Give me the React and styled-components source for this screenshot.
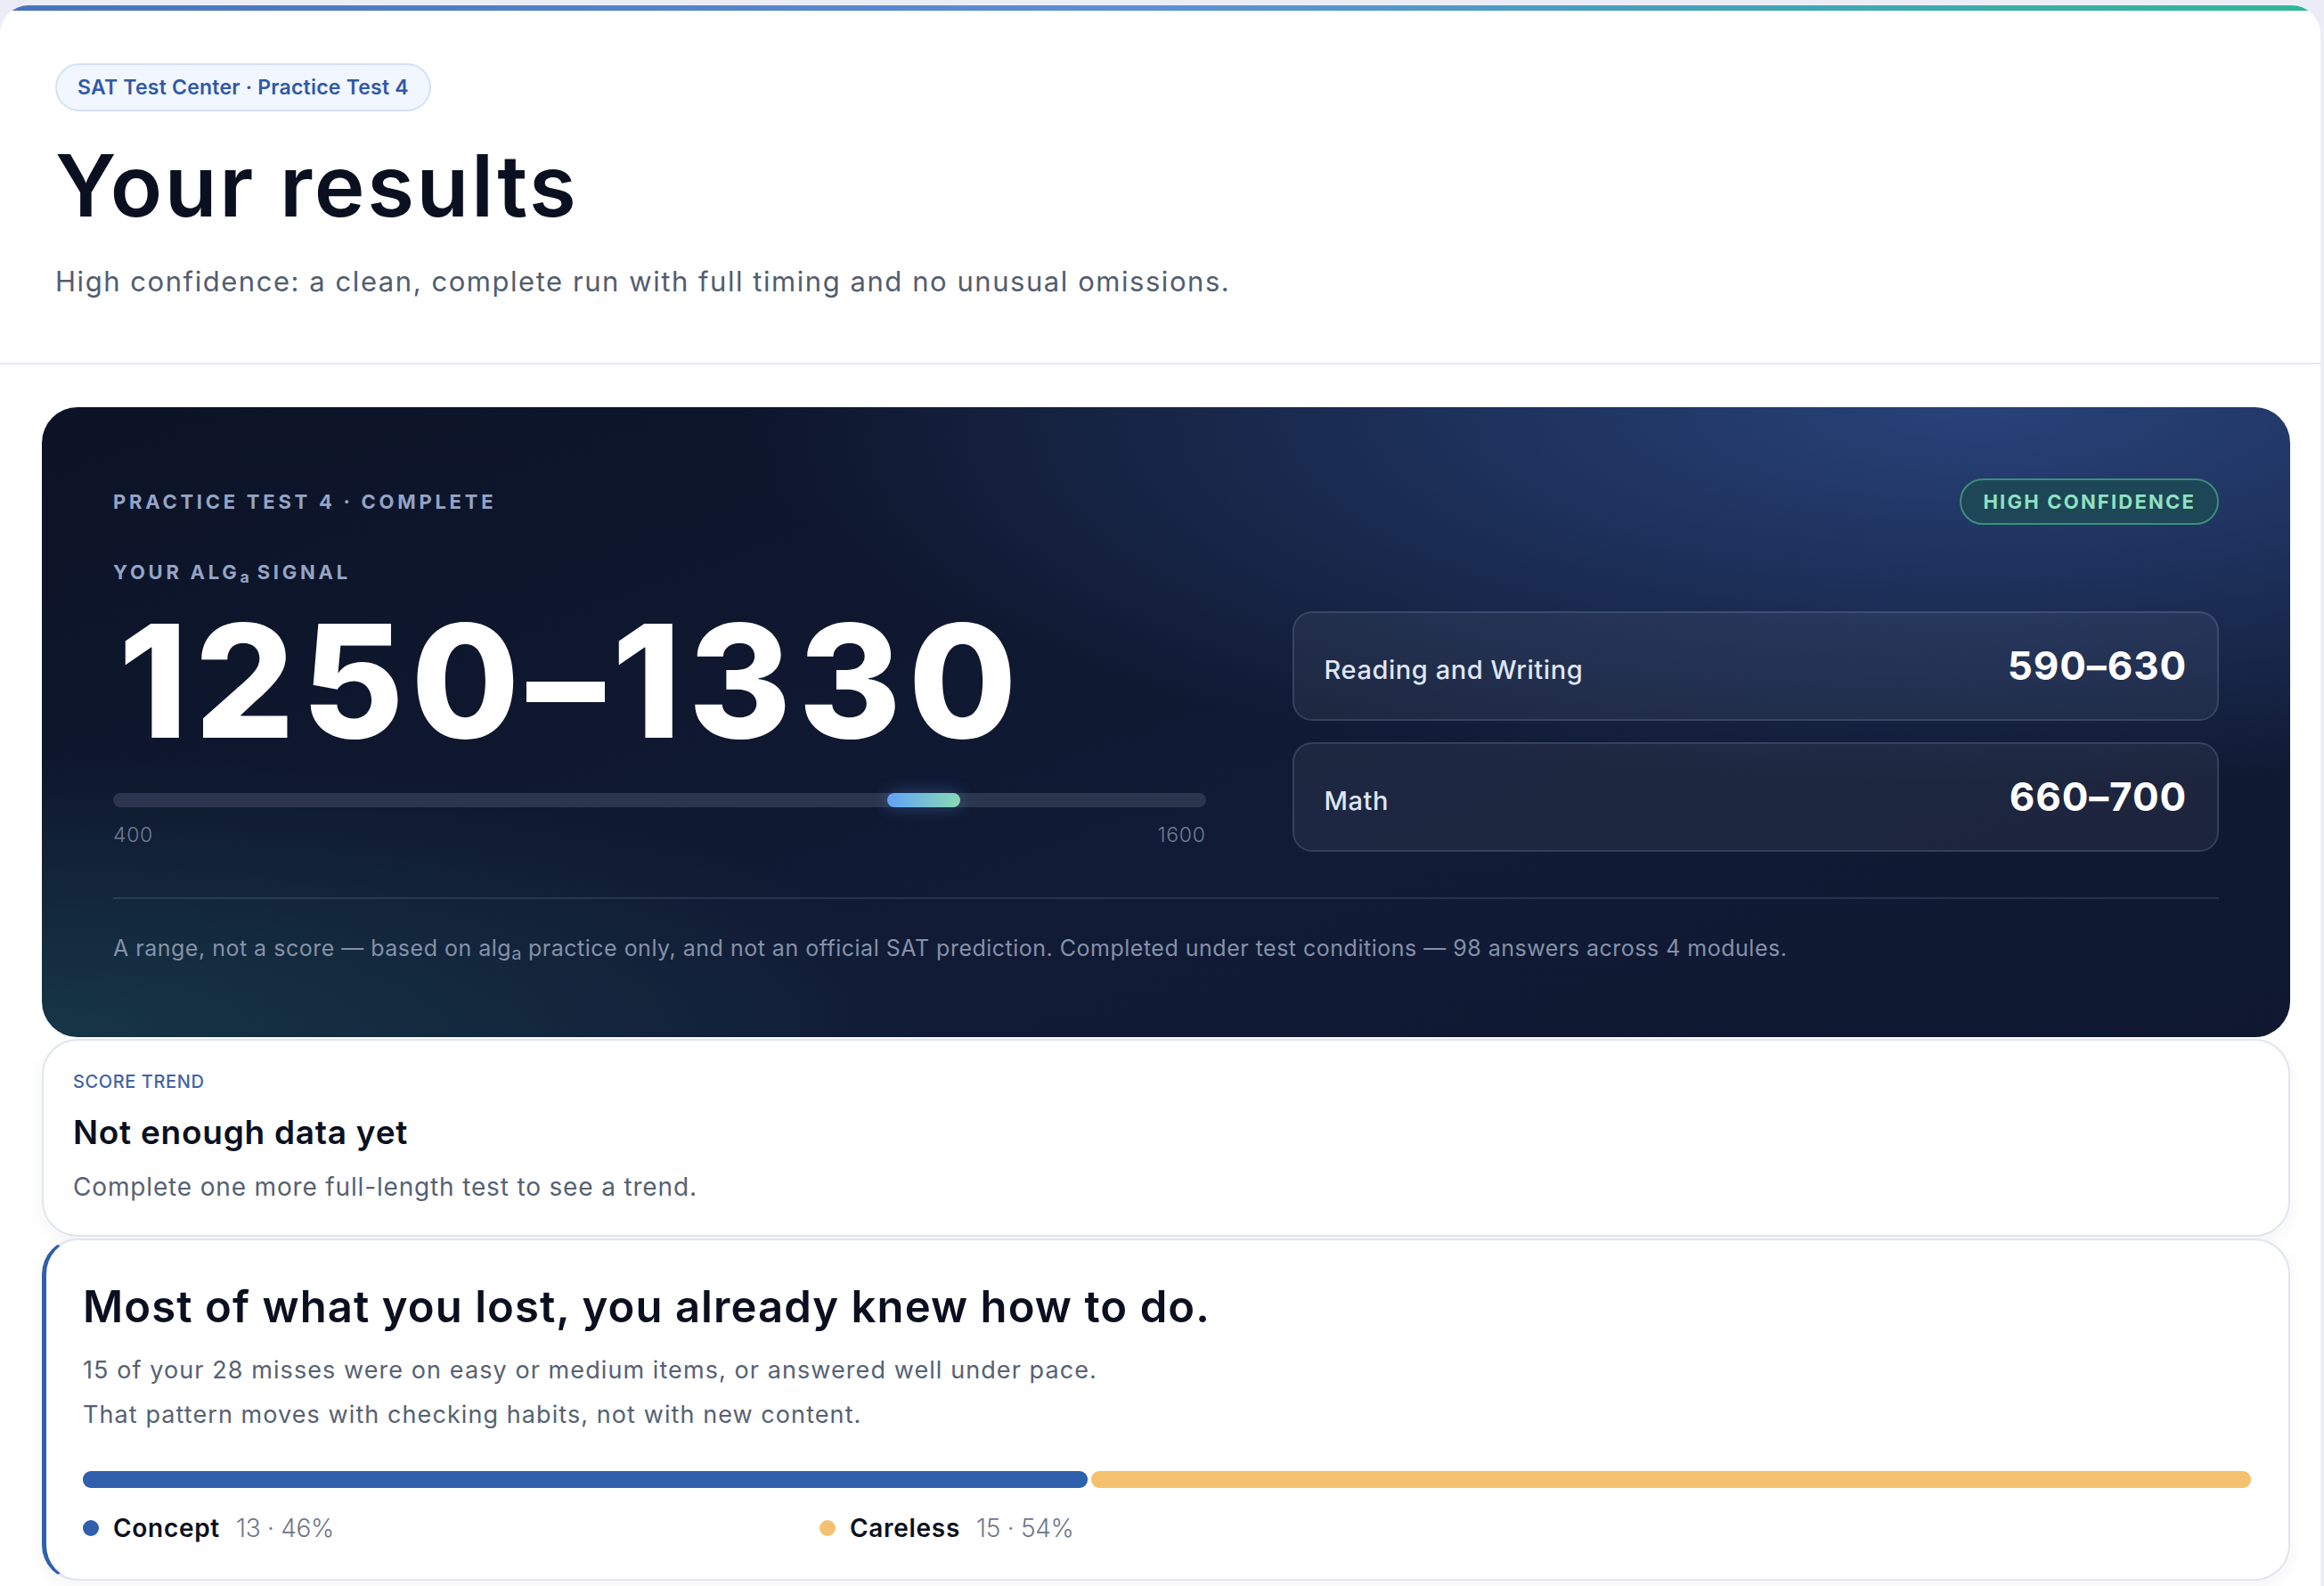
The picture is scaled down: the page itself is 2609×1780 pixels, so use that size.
import React from 'react';
import styled, { createGlobalStyle } from 'styled-components';

const GlobalStyle = createGlobalStyle`
  html, body {
    margin: 0;
    padding: 0;
    background: #eaedf5;
  }
  body {
    font-family: Inter, "Noto Sans", "Liberation Sans", sans-serif;
    color: #0b1120;
    -webkit-font-smoothing: antialiased;
  }
  * {
    box-sizing: border-box;
  }
`;

const Page = styled.main`
  margin: 6px 4px 0 0;
  min-height: calc(100vh - 6px);
  background: #fff;
  border-radius: 32px 32px 0 0;
  overflow: hidden;

  &::before {
    content: '';
    display: block;
    height: 6px;
    background: linear-gradient(90deg, #4a72bb 0%, #5b8fd6 50%, #2fb897 100%);
  }
`;

const Header = styled.header`
  padding: 59px 62px 0;
  height: 397px;
  border-bottom: 2px solid #e4e7f0;
`;

const Crumb = styled.span`
  display: inline-flex;
  align-items: center;
  height: 54px;
  padding: 0 23px;
  border-radius: 999px;
  border: 2px solid #d3e0fb;
  background: #f2f6ff;
  color: #2f5aa8;
  font-size: 23px;
  font-weight: 600;
  letter-spacing: 0.01em;
`;

const Title = styled.h1`
  margin: 31px 0 0;
  font-size: 96px;
  line-height: 1.1;
  font-weight: 600;
  letter-spacing: 0.028em;
  color: #0b1020;
`;

const Lede = styled.p`
  margin: 32px 0 0;
  font-size: 31px;
  line-height: 1.4;
  font-weight: 400;
  letter-spacing: 0.05em;
  color: #525d6f;
`;

const Stack = styled.section`
  display: flex;
  flex-direction: column;
  gap: 2px;
  padding: 48px 34px 0 47px;
`;

const HeroCard = styled.div`
  height: 707px;
  padding: 80px 80px 0;
  border-radius: 40px;
  color: #fff;
  background:
    radial-gradient(ellipse 55% 60% at 86% 0%, rgba(44, 74, 134, 0.85), rgba(44, 74, 134, 0) 100%),
    radial-gradient(ellipse 40% 45% at 0% 100%, rgba(26, 70, 82, 0.65), rgba(26, 70, 82, 0) 100%),
    linear-gradient(160deg, #0c1326 0%, #111b36 60%, #0f1830 100%);
`;

const TopRow = styled.div`
  display: flex;
  justify-content: space-between;
  align-items: center;
  height: 52px;
`;

const Eyebrow = styled.div`
  font-size: 22px;
  font-weight: 700;
  letter-spacing: 0.17em;
  text-transform: uppercase;
  color: #93a5c6;
`;

const Sub = styled.span`
  font-size: 0.8em;
  vertical-align: -0.22em;
  text-transform: none;
  letter-spacing: 0;
`;

const Confidence = styled.span`
  display: inline-flex;
  align-items: center;
  height: 52px;
  padding: 0 24px;
  border-radius: 999px;
  border: 2px solid #3f8c7c;
  background: #1d4656;
  color: #8fe1c1;
  font-size: 22px;
  font-weight: 700;
  letter-spacing: 0.1em;
`;

const HeroGrid = styled.div`
  display: grid;
  grid-template-columns: 1226fr 1040fr;
  column-gap: 97px;
  align-items: end;
  margin-top: 40px;
`;

const Signal = styled.div`
  display: flex;
  flex-direction: column;
`;

const BigRange = styled.div`
  margin-left: 6px;
  font-size: 176px;
  line-height: 1.21;
  font-weight: 800;
  letter-spacing: 0.045em;
  color: #fff;
`;

const Track = styled.div`
  position: relative;
  height: 16px;
  margin-top: 19px;
  border-radius: 8px;
  background: #2b364e;
`;

const Band = styled.div`
  position: absolute;
  top: 0;
  bottom: 0;
  border-radius: 8px;
  background: linear-gradient(90deg, #62a2f8, #89dab2);
  box-shadow: 0 0 18px rgba(98, 162, 248, 0.35);
`;

const TrackLabels = styled.div`
  display: flex;
  justify-content: space-between;
  margin-top: 17px;
  padding-bottom: 5px;
  font-size: 23px;
  font-weight: 300;
  letter-spacing: 0.03em;
  color: #6f7b93;
`;

const Sections = styled.div`
  display: flex;
  flex-direction: column;
  gap: 24px;
`;

const SectionRow = styled.div`
  display: flex;
  justify-content: space-between;
  align-items: center;
  height: 123px;
  padding: 0 34px;
  border-radius: 22px;
  border: 2px solid rgba(148, 163, 200, 0.2);
  background: rgba(255, 255, 255, 0.055);
`;

const SectionName = styled.span`
  font-size: 29px;
  font-weight: 500;
  letter-spacing: 0.02em;
  color: #dfe6f4;
  padding-top: 8px;
`;

const SectionScore = styled.span`
  font-size: 44px;
  font-weight: 700;
  letter-spacing: 0.02em;
  color: #fff;
`;

const Rule = styled.hr`
  margin: 51px 0 0;
  border: 0;
  border-top: 2px solid rgba(148, 163, 200, 0.18);
`;

const Footnote = styled.p`
  margin: 38px 0 0;
  font-size: 25px;
  font-weight: 400;
  line-height: 1.4;
  letter-spacing: 0.02em;
  color: #8591a9;
`;

const Panel = styled.div`
  border-radius: 40px;
  border: 2px solid #e0e5ee;
  border-left: ${({ accent }) => (accent ? '5px solid #2f5fad' : '2px solid #e0e5ee')};
  background: #fff;
  box-shadow: 0 6px 20px rgba(30, 41, 80, 0.05);
  padding: ${({ accent }) => (accent ? '44px 42px 40px 41px' : '34px 33px 33px')};
`;

const Kicker = styled.div`
  font-size: 20px;
  font-weight: 500;
  letter-spacing: 0.03em;
  color: #4263a6;
`;

const PanelTitle = styled.h2`
  margin: ${({ big }) => (big ? '0' : '22px 0 0')};
  font-size: ${({ big }) => (big ? '49px' : '37px')};
  line-height: 1.25;
  font-weight: 600;
  letter-spacing: ${({ big }) => (big ? '0.022em' : '0.02em')};
  color: #0b1020;
`;

const PanelText = styled.p`
  margin: ${({ first, small }) => (first ? (small ? '17px 0 0' : '20px 0 0') : '10px 0 0')};
  font-size: ${({ small }) => (small ? '28px' : '27px')};
  line-height: 1.5;
  font-weight: 400;
  letter-spacing: ${({ small }) => (small ? '0.03em' : '0.04em')};
  color: #566173;
`;

const SplitBar = styled.div`
  display: flex;
  gap: 4px;
  height: 19px;
  margin-top: 42px;
`;

const Segment = styled.div`
  height: 100%;
  border-radius: 9px;
  background: ${({ color }) => color};
`;

const Legend = styled.div`
  display: grid;
  grid-template-columns: repeat(3, 1fr);
  column-gap: 47px;
  margin-top: 28px;
`;

const LegendItem = styled.div`
  display: flex;
  align-items: center;
  gap: 16px;
  font-size: 28px;
`;

const Dot = styled.span`
  width: 18px;
  height: 18px;
  border-radius: 50%;
  background: ${({ color }) => color};
`;

const LegendName = styled.span`
  font-weight: 600;
  letter-spacing: 0.025em;
  color: #0b1020;
`;

const LegendCount = styled.span`
  margin-left: 2px;
  font-weight: 300;
  letter-spacing: -0.01em;
  color: #6e7789;
`;

const SCALE_MIN = 400;
const SCALE_MAX = 1600;

const range = { low: 1250, high: 1330 };

const sections = [
  { name: 'Reading and Writing', score: '590–630' },
  { name: 'Math', score: '660–700' },
];

const misses = [
  { name: 'Concept', count: 13, share: 46, color: '#2f5fad' },
  { name: 'Careless', count: 15, share: 54, color: '#f4c26e' },
];

function ScoreScale({ low, high }) {
  const span = SCALE_MAX - SCALE_MIN;
  const left = ((low - SCALE_MIN) / span) * 100;
  const width = ((high - low) / span) * 100;
  return (
    <>
      <Track>
        <Band style={{ left: `${left}%`, width: `${width}%` }} />
      </Track>
      <TrackLabels>
        <span>{SCALE_MIN}</span>
        <span>{SCALE_MAX}</span>
      </TrackLabels>
    </>
  );
}

export default function App() {
  return (
    <>
      <GlobalStyle />
      <Page>
        <Header>
          <Crumb>SAT Test Center · Practice Test 4</Crumb>
          <Title>Your results</Title>
          <Lede>High confidence: a clean, complete run with full timing and no unusual omissions.</Lede>
        </Header>

        <Stack>
          <HeroCard>
            <TopRow>
              <Eyebrow>Practice Test 4 · Complete</Eyebrow>
              <Confidence>HIGH CONFIDENCE</Confidence>
            </TopRow>

            <HeroGrid>
              <Signal>
                <Eyebrow>
                  Your ALG<Sub>a</Sub> Signal
                </Eyebrow>
                <BigRange>
                  {range.low}–{range.high}
                </BigRange>
                <ScoreScale low={range.low} high={range.high} />
              </Signal>

              <Sections>
                {sections.map((s) => (
                  <SectionRow key={s.name}>
                    <SectionName>{s.name}</SectionName>
                    <SectionScore>{s.score}</SectionScore>
                  </SectionRow>
                ))}
              </Sections>
            </HeroGrid>

            <Rule />
            <Footnote>
              A range, not a score — based on alg<Sub>a</Sub> practice only, and not an official SAT
              prediction. Completed under test conditions — 98 answers across 4 modules.
            </Footnote>
          </HeroCard>

          <Panel>
            <Kicker>SCORE TREND</Kicker>
            <PanelTitle>Not enough data yet</PanelTitle>
            <PanelText first small>
              Complete one more full-length test to see a trend.
            </PanelText>
          </Panel>

          <Panel accent>
            <PanelTitle big>Most of what you lost, you already knew how to do.</PanelTitle>
            <PanelText first>
              15 of your 28 misses were on easy or medium items, or answered well under pace.
            </PanelText>
            <PanelText>That pattern moves with checking habits, not with new content.</PanelText>

            <SplitBar>
              {misses.map((m) => (
                <Segment key={m.name} color={m.color} style={{ flex: m.count }} />
              ))}
            </SplitBar>

            <Legend>
              {misses.map((m) => (
                <LegendItem key={m.name}>
                  <Dot color={m.color} />
                  <LegendName>{m.name}</LegendName>
                  <LegendCount>
                    {m.count} · {m.share}%
                  </LegendCount>
                </LegendItem>
              ))}
            </Legend>
          </Panel>
        </Stack>
      </Page>
    </>
  );
}
